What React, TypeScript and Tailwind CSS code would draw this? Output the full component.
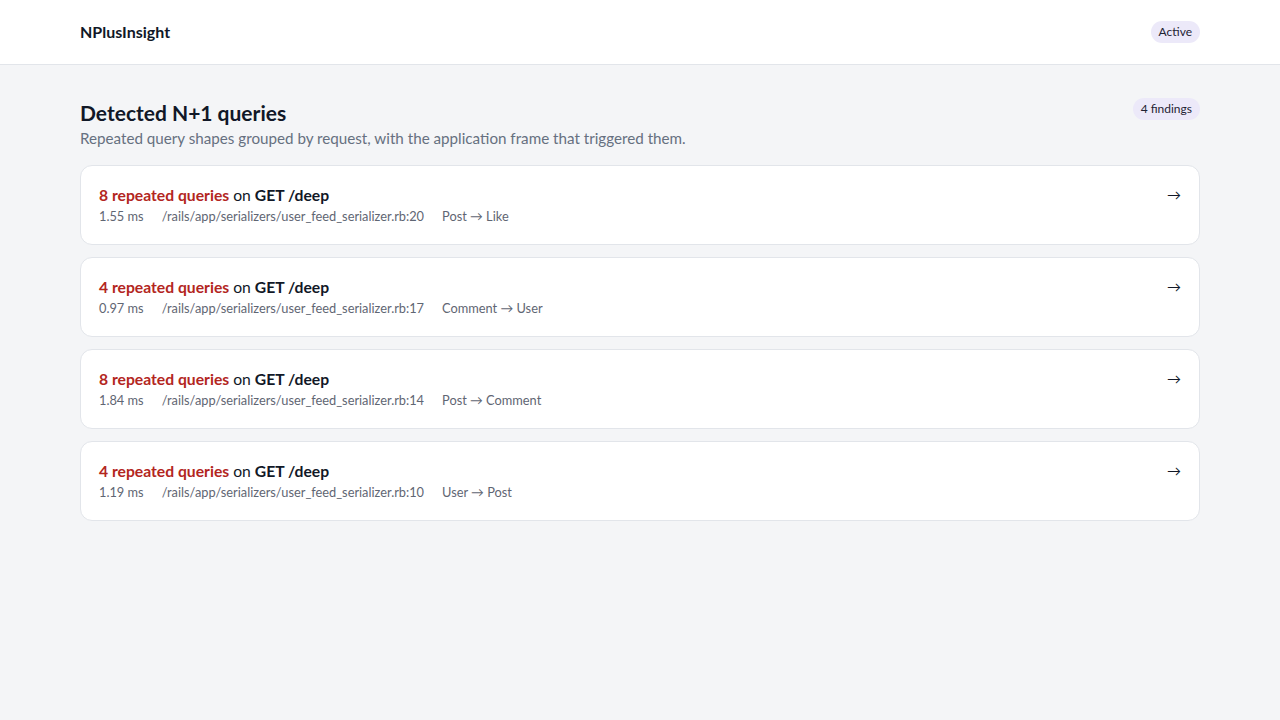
import React from "react";

type Finding = {
  count: number;
  method: string;
  path: string;
  duration: string;
  frame: string;
  chain: string;
};

const findings: Finding[] = [
  { count: 8, method: "GET", path: "/deep", duration: "1.55 ms", frame: "/rails/app/serializers/user_feed_serializer.rb:20", chain: "Post → Like" },
  { count: 4, method: "GET", path: "/deep", duration: "0.97 ms", frame: "/rails/app/serializers/user_feed_serializer.rb:17", chain: "Comment → User" },
  { count: 8, method: "GET", path: "/deep", duration: "1.84 ms", frame: "/rails/app/serializers/user_feed_serializer.rb:14", chain: "Post → Comment" },
  { count: 4, method: "GET", path: "/deep", duration: "1.19 ms", frame: "/rails/app/serializers/user_feed_serializer.rb:10", chain: "User → Post" },
];

function FindingCard({ f }: { f: Finding }) {
  return (
    <a
      href="#"
      className="flex h-[80px] items-start justify-between rounded-xl border border-[#e2e5ea] bg-white px-[18px] pt-[18px] hover:border-gray-300"
    >
      <div>
        <div className="text-[15.7px] leading-[22px] text-[#111827]">
          <span className="font-bold text-[#b3261e]">{f.count} repeated queries</span>
          <span> on </span>
          <span className="font-bold">
            {f.method} {f.path}
          </span>
        </div>
        <div className="mt-px flex gap-[18px] text-[12.8px] leading-[18px] text-[#5f6673]">
          <span>{f.duration}</span>
          <span>{f.frame}</span>
          <span>{f.chain}</span>
        </div>
      </div>
      <span className="text-[14px] leading-[22px] text-[#111827]">→</span>
    </a>
  );
}

export default function App() {
  return (
    <div className="min-h-screen bg-[#f4f5f7] font-['Lato',sans-serif] text-[#111827]">
      <header className="border-b border-[#e2e5ea] bg-white">
        <div className="mx-auto flex h-16 max-w-[1120px] items-center justify-between">
          <span className="text-[16px] font-bold">NPlusInsight</span>
          <span className="rounded-full bg-[#ece9f9] px-2 py-[3px] text-[12px] leading-4 text-[#1f2333]">Active</span>
        </div>
      </header>

      <main className="mx-auto max-w-[1120px] pt-[34px]">
        <div className="flex items-start justify-between">
          <div>
            <h1 className="text-[21px] font-bold leading-7">Detected N+1 queries</h1>
            <p className="text-[15.2px] leading-[22px] text-[#667080]">
              Repeated query shapes grouped by request, with the application frame that triggered them.
            </p>
          </div>
          <span className="mt-[-1px] rounded-full bg-[#ece9f9] px-2 py-[3px] text-[12px] leading-4 text-[#1f2333]">
            4 findings
          </span>
        </div>

        <div className="mt-4 flex flex-col gap-3">
          {findings.map((f, i) => (
            <FindingCard key={i} f={f} />
          ))}
        </div>
      </main>
    </div>
  );
}
